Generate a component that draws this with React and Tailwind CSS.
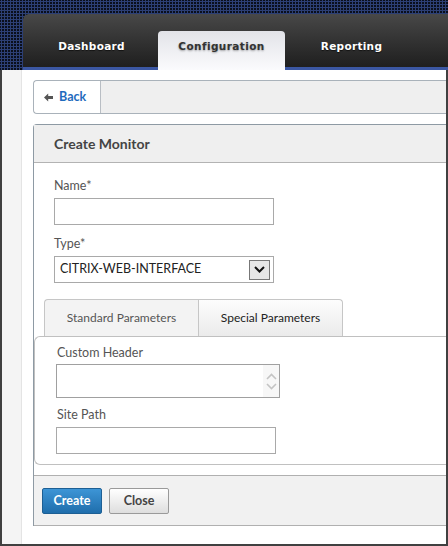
import React from 'react';

const formFont = { fontFamily: 'Lato, "Noto Sans", sans-serif' };

function TopTab({ label, active }) {
  if (active) {
    return (
      <div className="relative -mb-[3px] flex h-[39px] w-[127px] justify-center rounded-t-[4px] bg-gradient-to-b from-[#e2e3e8] to-[#fbfbfd] pt-[9px]">
        <span className="text-[10.5px] font-bold leading-[13px] tracking-[0.4px] text-[#333] [text-shadow:0_1px_2px_rgba(0,0,0,0.35)]">
          {label}
        </span>
      </div>
    );
  }
  return (
    <div className="flex h-[36px] w-[127px] justify-center pt-[9px]">
      <span className="text-[10.5px] font-bold leading-[13px] tracking-[0.3px] text-white [text-shadow:0_1px_1px_rgba(0,0,0,0.6)]">
        {label}
      </span>
    </div>
  );
}

function Header() {
  return (
    <div className="flex h-[70px] bg-[#0a0f1c] bg-[radial-gradient(#2c3f75_1px,transparent_1.1px)] bg-[length:3px_3px] pl-[23px] pt-[14px]">
      <div
        className="flex flex-1 items-end gap-[3px] rounded-tl-[6px] border-b-[3px] border-[#3b57a3] bg-gradient-to-b from-[#484848] to-[#1f1f1f] pl-[5px] pt-[17px]"
        style={{ fontFamily: '"DejaVu Sans", Verdana, sans-serif' }}
      >
        <TopTab label="Dashboard" />
        <TopTab label="Configuration" active />
        <TopTab label="Reporting" />
      </div>
    </div>
  );
}

function BackArrow() {
  return (
    <svg width="9" height="9" viewBox="0 0 9 9" className="mr-[6px]">
      <path d="M0 4.5 L4.2 0.5 L4.2 3 L9 3 L9 6 L4.2 6 L4.2 8.5 Z" fill="#555" />
    </svg>
  );
}

function Label({ children, className = '' }) {
  return <div className={'text-[12.5px] leading-[16px] text-[#555] ' + className}>{children}</div>;
}

export default function App() {
  return (
    <div className="h-[546px] w-[448px] overflow-hidden bg-white" style={formFont}>
      <Header />
      <div className="flex h-[476px] border-x-2 border-b-2 border-[#404040]">
        <div className="w-[20px] border-r border-[#e4e4e4] bg-[#f4f4f4]" />
        <div className="flex-1 pl-[11px] pt-[10px]">
          {/* back bar */}
          <div className="flex h-[34px] rounded-l-[4px] border border-r-0 border-[#a9b2ba] bg-[#efefef]">
            <button className="flex w-[67px] items-center rounded-l-[4px] border-r border-[#b9bec4] bg-white pl-[10px] text-[12.5px] font-bold text-[#1f6bbd]">
              <BackArrow />
              Back
            </button>
          </div>

          {/* create monitor panel */}
          <div className="mt-[10px] rounded-tl-[4px] border-l border-t border-[#8e9aa4]">
            <div className="flex h-[38px] items-center border-b border-[#b3b3b3] bg-[#efefef] pl-[20px] text-[14px] font-bold text-[#444]">
              Create Monitor
            </div>

            <div className="pl-[20px] pt-[15px]">
              <Label>Name*</Label>
              <input className="mt-[4px] block h-[27px] w-[220px] border border-[#a9a9a9] bg-white outline-none" />
              <Label className="mt-[11px]">Type*</Label>
              <div className="mt-[4px] flex h-[27px] w-[220px] items-center justify-between border border-[#a9a9a9] bg-white pl-[5px] pr-[3px]">
                <span className="text-[12.5px] text-[#222]">CITRIX-WEB-INTERFACE</span>
                <span className="flex h-[20px] w-[21px] items-center justify-center border border-[#777] bg-[#e6e6e6]">
                  <svg width="11" height="7" viewBox="0 0 11 7">
                    <path d="M1 1 L5.5 5.5 L10 1" fill="none" stroke="#111" strokeWidth="2" />
                  </svg>
                </span>
              </div>
            </div>

            {/* tabs */}
            <div className="mt-[16px] flex pl-[10px]">
              <div className="flex h-[37px] w-[154px] items-center justify-center rounded-tl-[4px] border-l border-t border-[#c6c6c6] bg-[#f3f3f3] text-[12px] text-[#555]">
                Standard Parameters
              </div>
              <div className="flex h-[37px] w-[145px] items-center justify-center rounded-tr-[4px] border-x border-t border-[#c6c6c6] bg-gradient-to-b from-[#fdfdfd] to-[#ebebeb] text-[12px] text-[#222]">
                Special Parameters
              </div>
            </div>
            <div className="rounded-l-[6px] border-y border-l border-[#c0c0c0] pb-[10px] pl-[21px] pt-[8px]">
              <Label className="ml-[1px]">Custom Header</Label>
              <div className="mt-[3px] flex h-[34px] w-[224px] justify-end border border-[#a0a0a0] bg-white">
                <div className="flex w-[16px] flex-col items-center justify-center gap-[3px] bg-[#f7f7f7]">
                  <svg width="11" height="7" viewBox="0 0 11 7">
                    <path d="M1 6 L5.5 1.5 L10 6" fill="none" stroke="#c4c4c4" strokeWidth="1.6" />
                  </svg>
                  <svg width="11" height="7" viewBox="0 0 11 7">
                    <path d="M1 1 L5.5 5.5 L10 1" fill="none" stroke="#c4c4c4" strokeWidth="1.6" />
                  </svg>
                </div>
              </div>
              <Label className="ml-[1px] mt-[9px]">Site Path</Label>
              <input className="mt-[4px] block h-[27px] w-[220px] border border-[#a9a9a9] bg-white outline-none" />
            </div>

            {/* footer */}
            <div className="mt-[10px] flex h-[51px] items-start gap-[7px] border-y border-[#b0b0b0] bg-[#f1f1f1] pl-[8px] pt-[12px]">
              <button className="h-[26px] w-[60px] rounded-[2px] border border-[#1d5f94] bg-gradient-to-b from-[#3d95d6] to-[#1f6eac] text-[12.5px] font-bold text-white">
                Create
              </button>
              <button className="h-[26px] w-[60px] rounded-[2px] border border-[#9a9a9a] bg-gradient-to-b from-white to-[#dedede] text-[12.5px] font-bold text-[#444]">
                Close
              </button>
            </div>
          </div>
        </div>
      </div>
    </div>
  );
}
